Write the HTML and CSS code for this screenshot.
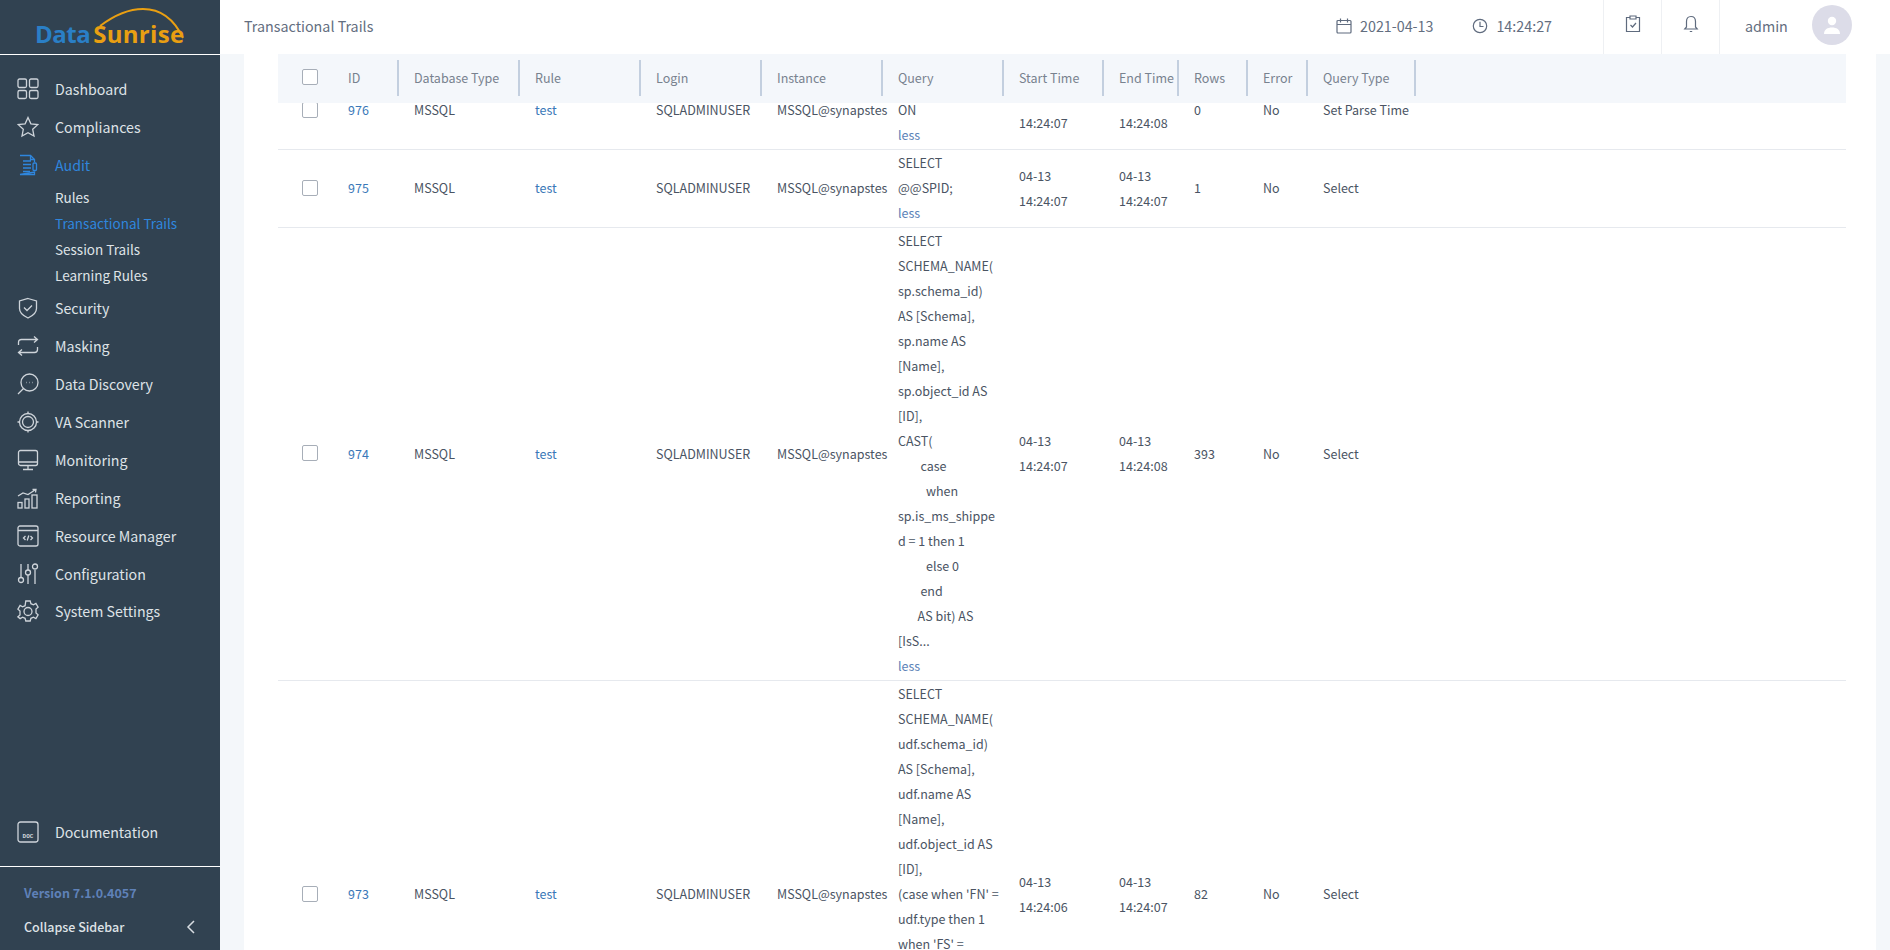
FILE: index.html
```html
<!DOCTYPE html>
<html lang="en">
<head>
    <meta charset="UTF-8">
    <meta name="viewport" content="width=device-width, initial-scale=1.0">
    <title>Transactional Trails</title>
    <link rel="stylesheet" href="styles.css">
</head>
<body>

    <aside class="sidebar">
        <div class="logo">
            <svg class="logo-arc" width="88" height="34" viewBox="0 0 88 34"><path d="M2 19 C18 7 32 2 45 2 C62 2 76 12 85 31" fill="none" stroke="#e99f12" stroke-width="2"/></svg>
            <span class="logo-data">Data</span><span class="logo-sun">Sunrise</span>
        </div>

        <nav class="nav">
            <a class="nav-item">
                <svg class="icon" viewBox="0 0 22 22"><rect x="1" y="1" width="8.5" height="8.5" rx="1.5"/><rect x="12.5" y="1" width="8.5" height="8.5" rx="1.5"/><rect x="1" y="12.5" width="8.5" height="8" rx="1.5"/><rect x="12.5" y="12.5" width="8.5" height="8" rx="1.5"/></svg>
                Dashboard
            </a>
            <a class="nav-item">
                <svg class="icon" viewBox="0 0 22 22"><path d="M11 1.5l2.9 6.3 6.8.8-5 4.7 1.3 6.8-6-3.4-6 3.4 1.3-6.8-5-4.7 6.8-.8z"/></svg>
                Compliances
            </a>
            <a class="nav-item active">
                <svg class="icon" viewBox="0 0 22 22"><path d="M3 1.5h10.5l4 4V8M17.5 18v2.5H3z"/><path d="M13.5 1.5v4h4M6 7h8M6 10.5h8M6 14h8M6 17.5h7"/><rect x="16" y="9" width="3.5" height="7.5" rx="1"/></svg>
                Audit
            </a>
            <div class="sub-nav">
                <a>Rules</a>
                <a class="active">Transactional Trails</a>
                <a>Session Trails</a>
                <a>Learning Rules</a>
            </div>
            <a class="nav-item">
                <svg class="icon" viewBox="0 0 22 22"><path d="M11 1.5l8.5 2.5v7.5c0 4.5-4 7.5-8.5 9.5-4.5-2-8.5-5-8.5-9.5V4z"/><path d="M7 10.5l3 3 5-5"/></svg>
                Security
            </a>
            <a class="nav-item">
                <svg class="icon" viewBox="0 0 22 22"><path d="M1.5 10V7.5q0-3 3-3H20M17 1.5l3.5 3-3.5 3M20.5 12v2.5q0 3-3 3H2M5 14.5l-3.5 3 3.5 3"/></svg>
                Masking
            </a>
            <a class="nav-item">
                <svg class="icon" viewBox="0 0 22 22"><circle cx="12.5" cy="9.5" r="8.5"/><path d="M6.5 15.5L1 21M9.5 9.5h.5M12.3 9.5h.5M15 9.5h.5"/></svg>
                Data Discovery
            </a>
            <a class="nav-item">
                <svg class="icon" viewBox="0 0 22 22"><circle cx="11" cy="11" r="5.5"/><circle cx="11" cy="11" r="8.5"/><path d="M11 .5v2M11 19.5v2M.5 11h2M19.5 11h2"/></svg>
                VA Scanner
            </a>
            <a class="nav-item">
                <svg class="icon" viewBox="0 0 22 22"><rect x="1.5" y="1.5" width="19" height="15" rx="2"/><path d="M1.5 13h19M11 16.5v4M6 20.5h10"/></svg>
                Monitoring
            </a>
            <a class="nav-item">
                <svg class="icon" viewBox="0 0 22 22"><path d="M1 9l5-3 5 1.5L18 3M15.5 2.5L19 2.5l-.5 3"/><rect x="1" y="15.5" width="4" height="5.5"/><rect x="8" y="12" width="4" height="9"/><rect x="15" y="8" width="5" height="13"/></svg>
                Reporting
            </a>
            <a class="nav-item">
                <svg class="icon" viewBox="0 0 22 22"><rect x="1" y="1" width="20" height="20" rx="2"/><path d="M1 5.5h20M8.5 11L6.5 13l2 2M13.5 11l2 2-2 2M11.8 10.5l-1.6 5"/></svg>
                Resource Manager
            </a>
            <a class="nav-item">
                <svg class="icon" viewBox="0 0 22 22"><path d="M4 1v13M11 1v6M11 12v9M18 7v14"/><circle cx="4" cy="17" r="2.5"/><circle cx="11" cy="9.5" r="2.5"/><circle cx="18" cy="3.5" r="2.5"/></svg>
                Configuration
            </a>
            <a class="nav-item">
                <svg class="icon" viewBox="0 0 22 22"><path d="M8.8 1h4.4l.7 2.7 2.5 1.1 2.5-1.4 2.2 3.8-2.1 1.9v3.8l2.1 1.9-2.2 3.800-2.500-1.400-2.500 1.100-.7 2.700H8.800l-.7-2.700-2.500-1.100-2.500 1.400L.9 16.800 3 14.900v-3.800L.9 9.200l2.200-3.800 2.500 1.400 2.500-1.100z"/><circle cx="11" cy="11.5" r="4"/></svg>
                System Settings
            </a>
        </nav>

        <a class="nav-item doc-item">
            <svg class="icon" viewBox="0 0 22 22"><rect x="1" y="1" width="20" height="20" rx="2.5"/><text x="11" y="17" class="doc-label">DOC</text></svg>
            Documentation
        </a>

        <div class="side-footer">
            <div class="version">Version 7.1.0.4057</div>
            <div class="collapse-row">
                <span>Collapse Sidebar</span>
                <svg width="10" height="14" viewBox="0 0 10 14"><path d="M8 1L2 7l6 6" fill="none" stroke="#d8dde2" stroke-width="1.5"/></svg>
            </div>
        </div>
    </aside>

    <div class="main">
        <header class="topbar">
            <div class="page-title">Transactional Trails</div>
            <div class="top-clock">
                <svg class="top-icon" viewBox="0 0 16 16"><rect x="1" y="2.5" width="14" height="12.5" rx="1"/><path d="M1 6.5h14M4.5 .5v4M11.5 .5v4"/></svg>
                <span>2021-04-13</span>
            </div>
            <div class="top-clock time">
                <svg class="top-icon" viewBox="0 0 16 16"><circle cx="8" cy="8" r="6.7"/><path d="M8 3.8V8.5h3.5"/></svg>
                <span>14:24:27</span>
            </div>
            <div class="top-btn">
                <svg class="top-icon" viewBox="0 0 16 18"><path d="M5 2.5H1.5v14h13v-14H11"/><path d="M5 1h6v3H5zM5.5 10l2 2 3.5-4"/></svg>
            </div>
            <div class="top-btn">
                <svg class="top-icon" viewBox="0 0 16 18"><path d="M8 1.5c-3 0-4.500 2-4.500 5V12L1.800 14h12.400L12.500 12V6.500c0-3-1.500-5-4.500-5zM6.800 16.500h2.400"/></svg>
            </div>
            <div class="user">
                <span>admin</span>
                <div class="avatar">
                    <svg width="20" height="20" viewBox="0 0 20 20"><circle cx="10" cy="6" r="4.2" fill="#fff"/><path d="M2 19c0-4.500 3.500-6.500 8-6.500s8 2 8 6.500z" fill="#fff"/></svg>
                </div>
            </div>
        </header>

        <div class="content">
            <div class="card">
                <table class="grid grid-head">
                    <colgroup>
                        <col class="c-check"><col class="c-id"><col class="c-wide"><col class="c-wide"><col class="c-wide"><col class="c-wide"><col class="c-wide"><col class="c-start"><col class="c-end"><col class="c-rows"><col class="c-error"><col class="c-type"><col>
                    </colgroup>
                    <tr>
                        <th class="no-line"><input type="checkbox"></th>
                        <th>ID</th>
                        <th>Database Type</th>
                        <th>Rule</th>
                        <th>Login</th>
                        <th>Instance</th>
                        <th>Query</th>
                        <th>Start Time</th>
                        <th>End Time</th>
                        <th>Rows</th>
                        <th>Error</th>
                        <th>Query Type</th>
                        <th class="no-text"></th>
                    </tr>
                </table>

                <table class="grid grid-body">
                    <colgroup>
                        <col class="c-check"><col class="c-id"><col class="c-wide"><col class="c-wide"><col class="c-wide"><col class="c-wide"><col class="c-wide"><col class="c-start"><col class="c-end"><col class="c-rows"><col class="c-error"><col class="c-type"><col>
                    </colgroup>
                    <tr>
                        <td><input type="checkbox"></td>
                        <td><a>976</a></td>
                        <td>MSSQL</td>
                        <td><a>test</a></td>
                        <td>SQLADMINUSER</td>
                        <td>MSSQL@synapstes</td>
                        <td><span class="query">&nbsp;
ON</span><a class="less">less</a></td>
                        <td>&nbsp;<br>14:24:07</td>
                        <td>&nbsp;<br>14:24:08</td>
                        <td>0</td>
                        <td>No</td>
                        <td>Set Parse Time</td>
                        <td></td>
                    </tr>
                    <tr>
                        <td><input type="checkbox"></td>
                        <td><a>975</a></td>
                        <td>MSSQL</td>
                        <td><a>test</a></td>
                        <td>SQLADMINUSER</td>
                        <td>MSSQL@synapstes</td>
                        <td><span class="query">SELECT
@@SPID;</span><a class="less">less</a></td>
                        <td>04-13<br>14:24:07</td>
                        <td>04-13<br>14:24:07</td>
                        <td>1</td>
                        <td>No</td>
                        <td>Select</td>
                        <td></td>
                    </tr>
                    <tr>
                        <td><input type="checkbox"></td>
                        <td><a>974</a></td>
                        <td>MSSQL</td>
                        <td><a>test</a></td>
                        <td>SQLADMINUSER</td>
                        <td>MSSQL@synapstes</td>
                        <td><span class="query">SELECT
SCHEMA_NAME(
sp.schema_id)
AS [Schema],
sp.name AS
[Name],
sp.object_id AS
[ID],
CAST(
        case
          when
sp.is_ms_shippe
d = 1 then 1
          else 0
        end
       AS bit) AS
[IsS...</span><a class="less">less</a></td>
                        <td>04-13<br>14:24:07</td>
                        <td>04-13<br>14:24:08</td>
                        <td>393</td>
                        <td>No</td>
                        <td>Select</td>
                        <td></td>
                    </tr>
                    <tr>
                        <td><input type="checkbox"></td>
                        <td><a>973</a></td>
                        <td>MSSQL</td>
                        <td><a>test</a></td>
                        <td>SQLADMINUSER</td>
                        <td>MSSQL@synapstes</td>
                        <td><span class="query">SELECT
SCHEMA_NAME(
udf.schema_id)
AS [Schema],
udf.name AS
[Name],
udf.object_id AS
[ID],
(case when 'FN' =
udf.type then 1
when 'FS' =
udf.type then 1
when 'FT' =
udf.type then 1
else 0 end)
AS [IsS...</span><a class="less">less</a></td>
                        <td>04-13<br>14:24:06</td>
                        <td>04-13<br>14:24:07</td>
                        <td>82</td>
                        <td>No</td>
                        <td>Select</td>
                        <td></td>
                    </tr>
                </table>
            </div>
        </div>
    </div>

</body>
</html>
```

FILE: styles.css
```css
html, body {
    height: 100%;
    overflow: hidden;
}
body {
    margin: 0;
    display: flex;
    font-family: "Noto Sans CJK JP", "Noto Sans", sans-serif;
    font-size: 12.5px;
    color: #4a5463;
    background-color: #f4f7fa;
}

/* Sidebar */
.sidebar {
    width: 220px;
    height: 950px;
    flex-shrink: 0;
    display: flex;
    flex-direction: column;
    background-color: #314251;
    color: #dfe3e7;
}
.logo {
    position: relative;
    height: 37px;
    padding: 17px 0 0 35px;
    border-bottom: 1px solid #fff;
    font-family: "Open Sans", sans-serif;
    font-size: 24px;
    line-height: 34px;
    font-weight: 700;
    white-space: nowrap;
}
.logo-arc {
    position: absolute;
    left: 98px;
    top: 7px;
}
.logo-data {
    color: #2a7fc6;
    margin-right: 3px;
    letter-spacing: -0.5px;
}
.logo-sun {
    color: #e99f12;
    letter-spacing: 0.3px;
}
.nav {
    flex: 1;
    padding-top: 15px;
}
.nav-item {
    display: flex;
    align-items: center;
    gap: 16px;
    height: 38px;
    padding-left: 17px;
    font-size: 14.2px;
}
.nav-item.active {
    color: #2f86dd;
}
.nav-item:last-child {
    margin-top: -1px;
}
.icon {
    width: 22px;
    height: 22px;
    flex-shrink: 0;
    fill: none;
    stroke: #ced4da;
    stroke-width: 1.3;
}
.active .icon {
    stroke: #2f86dd;
}
.doc-label {
    font-family: "Liberation Mono", monospace;
    font-size: 6px;
    font-weight: 700;
    text-anchor: middle;
    fill: #ced4da;
    stroke: none;
}
.sub-nav {
    margin-bottom: 1px;
    padding-left: 55px;
}
.sub-nav a {
    display: block;
    height: 26px;
    line-height: 26px;
    font-size: 13.5px;
}
.sub-nav a.active {
    color: #2f86dd;
}
.doc-item {
    height: 36px;
    margin-bottom: 16px;
}
.side-footer {
    height: 83px;
    border-top: 1px solid #fff;
    padding: 0 24px;
    font-size: 12.5px;
    font-weight: 500;
}
.version {
    margin-top: 15px;
    line-height: 22px;
    font-weight: 700;
    color: #5f81b8;
}
.collapse-row {
    display: flex;
    justify-content: space-between;
    align-items: center;
    margin-top: 12px;
    line-height: 22px;
}

/* Top bar */
.main {
    flex: 1;
    min-width: 0;
    display: flex;
    flex-direction: column;
}
.topbar {
    height: 54px;
    flex-shrink: 0;
    display: flex;
    align-items: center;
    padding-left: 24px;
    background-color: white;
    color: #636e80;
    font-size: 14.3px;
}
.page-title {
    flex: 1;
    padding-bottom: 3px;
}
.top-clock {
    display: flex;
    align-items: center;
    gap: 8px;
    margin-right: 39px;
    padding-bottom: 3px;
}
.top-clock.time {
    margin-right: 51px;
}
.top-icon {
    width: 16px;
    height: 18px;
    fill: none;
    stroke: #5f6b7e;
    stroke-width: 1.2;
}
.top-btn {
    width: 58px;
    height: 54px;
    box-sizing: border-box;
    padding-bottom: 6px;
    display: flex;
    align-items: center;
    justify-content: center;
    border-left: 1px solid #eef0f3;
}
.user {
    width: 171px;
    height: 54px;
    box-sizing: border-box;
    display: flex;
    align-items: center;
    gap: 24px;
    padding-left: 25px;
    border-left: 1px solid #eef0f3;
}
.user span {
    padding-bottom: 3px;
}
.avatar {
    width: 40px;
    height: 40px;
    margin-top: -4px;
    border-radius: 50%;
    background-color: #dcdce8;
    display: flex;
    align-items: center;
    justify-content: center;
}

/* Table card */
.content {
    flex: 1;
    min-height: 0;
    padding: 0 14px 0 24px;
    overflow: hidden;
}
.card {
    height: 100%;
    padding: 0 30px 0 34px;
    background-color: white;
}
.grid {
    width: 100%;
    table-layout: fixed;
    border-collapse: collapse;
}
.c-check { width: 55px; }
.c-id { width: 66px; }
.c-wide { width: 121px; }
.c-start { width: 100px; }
.c-end { width: 75px; }
.c-rows { width: 69px; }
.c-error { width: 60px; }
.c-type { width: 108px; }

.grid-head {
    position: relative;
    z-index: 1;
    background-color: #f4f7fb;
}
.grid-head th {
    height: 46px;
    padding: 0 0 3px 15px;
    font-weight: 400;
    text-align: left;
    color: #78828f;
    white-space: nowrap;
    background-image: linear-gradient(#c3cfdf, #c3cfdf);
    background-repeat: no-repeat;
    background-position: right 0 top 6px;
    background-size: 2px 36px;
}
.grid-head th.no-line {
    padding-left: 24px;
    background-image: none;
}
.grid-head th.no-text {
    background-image: none;
}
.grid-body {
    margin-top: -31px;
}
.grid-body td {
    padding: 0 0 2px 15px;
    line-height: 25px;
    border-bottom: 1px solid #e6e9ee;
    white-space: nowrap;
}
.grid-body td:first-child {
    padding-left: 24px;
}
.grid-body a {
    color: #3a78b8;
}
.query {
    display: block;
    white-space: pre;
}
.grid-body a.less {
    display: block;
    color: #5b82b8;
}
input[type="checkbox"] {
    appearance: none;
    display: block;
    width: 16px;
    height: 16px;
    margin: 0;
    border: 1px solid #a7aeb8;
    border-radius: 2px;
    background-color: white;
}
```
